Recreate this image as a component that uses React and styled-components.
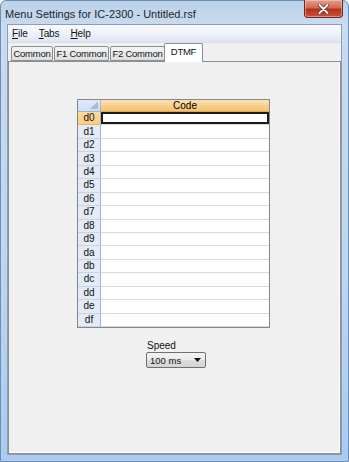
import React from 'react';
import styled, { createGlobalStyle } from 'styled-components';

const Global = createGlobalStyle`
  html, body { margin: 0; padding: 0; background: #fff; }
  body {
    width: 349px; height: 462px; overflow: hidden;
    font-family: "Liberation Sans", "Noto Sans", sans-serif;
    font-size: 10px; color: #000;
  }
  * { box-sizing: border-box; }
`;

const Window = styled.div`
  width: 349px;
  height: 462px;
  display: flex;
  flex-direction: column;
  background: linear-gradient(180deg, #bcd2ea 0px, #c8dbef 24px, #bdd5ef 60%, #a9cbf0 100%);
  border: 1px solid #6e8fb5;
  border-radius: 6px 6px 0 0;
  padding: 0 6px 6px;
`;

const TitleBar = styled.div`
  height: 23px;
  margin: 0 -6px;
  padding-left: 4px;
  display: flex;
  align-items: center;
  justify-content: space-between;
`;

const Title = styled.span`
  font-size: 11px;
  color: #1e1e1e;
  padding-top: 2px;
`;

const CloseButton = styled.div`
  align-self: flex-start;
  width: 39px;
  height: 18px;
  margin-top: -1px;
  margin-right: 5px;
  border: 1px solid #6a2a22;
  border-top: none;
  border-radius: 0 0 4px 4px;
  background: linear-gradient(180deg, #e3a08f 0%, #d26a52 45%, #b8311b 55%, #c8513a 100%);
  box-shadow: inset 0 0 0 1px rgba(255, 220, 210, 0.45);
  display: flex;
  align-items: center;
  justify-content: center;
`;

const Client = styled.div`
  flex: 1;
  display: flex;
  flex-direction: column;
  background: #f0f0f0;
  border: 1px solid #8e9db3;
`;

const MenuBar = styled.div`
  height: 18px;
  display: flex;
  align-items: center;
  gap: 11px;
  padding-left: 4px;
  background: linear-gradient(180deg, #f8f9fd 0%, #eef2fa 50%, #dee5f2 100%);
  border-bottom: 1px solid #d8deea;
`;

const MenuItem = styled.span`
  font-size: 10px;
  letter-spacing: -0.1px;
  color: #111;
  white-space: nowrap;
  u { text-decoration: underline; text-underline-offset: 1px; }
`;

const TabStrip = styled.div`
  height: 18px;
  display: flex;
  align-items: flex-end;
  padding-left: 2px;
  position: relative;
  z-index: 1;
`;

const Tab = styled.div`
  width: ${p => p.$w}px;
  height: ${p => (p.$active ? 19 : 15)}px;
  margin: 0 ${p => (p.$active ? -1 : 0)}px 0 ${p => (p.$active ? -1 : 1)}px;
  margin-bottom: ${p => (p.$active ? -1 : 0)}px;
  display: flex;
  align-items: center;
  justify-content: center;
  padding-bottom: ${p => (p.$active ? 3 : 0)}px;
  font-size: 9.5px;
  letter-spacing: -0.25px;
  white-space: nowrap;
  overflow: hidden;
  color: #111;
  border: 1px solid #8a8e97;
  border-bottom: ${p => (p.$active ? 'none' : '1px solid #8a8e97')};
  border-radius: 2px 2px 0 0;
  background: ${p => (p.$active ? '#ffffff' : 'linear-gradient(180deg, #f4f4f4 0%, #ebebeb 50%, #dddddd 100%)')};
`;

const TabPanel = styled.div`
  flex: 1;
  display: flex;
  flex-direction: column;
  align-items: center;
  border: 1px solid #8a8e97;
  box-shadow: inset -1px 0 0 #ffffff, inset 0 -1px 0 #ffffff;
  background: #f0f0f0;
  padding-top: 37px;
  padding-right: 2px;
`;

const Grid = styled.div`
  width: 193px;
  border: 1px solid #828790;
  background: #ffffff;
  display: grid;
  grid-template-columns: 23px 1fr;
  grid-template-rows: 12px repeat(16, 13.44px);
`;

const Corner = styled.div`
  background: linear-gradient(180deg, #e1ebf7, #cfdef1);
  border-right: 1px solid #9eb6ce;
  border-bottom: 1px solid #9eb6ce;
  display: flex;
  align-items: flex-end;
  justify-content: flex-end;
  padding: 0 2px 2px 0;
`;

const ColHeader = styled.div`
  background: linear-gradient(180deg, #fbe2b4 0%, #f7d191 50%, #f3c26f 100%);
  border-bottom: 1px solid #e3a84f;
  display: flex;
  align-items: center;
  justify-content: center;
  font-size: 10px;
  line-height: 1;
`;

const RowHeader = styled.div`
  background: ${p => (p.$selected ? 'linear-gradient(180deg, #fbdca2, #f6cc82)' : '#e3ebf6')};
  border-right: 1px solid #9eb6ce;
  border-bottom: 1px solid ${p => (p.$selected ? '#e9b765' : '#c6d5e8')};
  display: flex;
  align-items: center;
  justify-content: center;
  font-size: 10px;
  line-height: 1;
  color: #111;
`;

const Cell = styled.div`
  background: #ffffff;
  border-bottom: 1px solid #d9d9d9;
  box-shadow: ${p => (p.$current ? 'inset 0 0 0 2px #1b1b1b' : 'none')};
`;

const SpeedGroup = styled.div`
  margin-top: 12px;
  margin-left: 5px;
  display: flex;
  flex-direction: column;
  gap: 1px;
`;

const Label = styled.span`
  font-size: 10px;
  color: #111;
  padding-left: 1px;
`;

const Select = styled.div`
  width: 60px;
  height: 16px;
  border: 1px solid #707070;
  border-radius: 2px;
  background: linear-gradient(180deg, #f3f3f3 0%, #ebebeb 50%, #dddddd 51%, #d4d4d4 100%);
  display: flex;
  align-items: center;
  justify-content: space-between;
  padding: 0 4px 0 3px;
  font-size: 9.5px;
  color: #111;
`;

const rows = ['d0','d1','d2','d3','d4','d5','d6','d7','d8','d9','da','db','dc','dd','de','df'];
const tabs = [
  { label: 'Common', w: 42 },
  { label: 'F1 Common', w: 55 },
  { label: 'F2 Common', w: 55 },
  { label: 'DTMF', w: 39, active: true },
];

export default function App() {
  return (
    <>
      <Global />
      <Window>
        <TitleBar>
          <Title>Menu Settings for IC-2300 - Untitled.rsf</Title>
          <CloseButton>
            <svg width="11" height="10" viewBox="0 0 11 10">
              <path d="M1.5 1 L9.5 9 M9.5 1 L1.5 9" stroke="#5a1a12" strokeWidth="3.2" strokeLinecap="round" />
              <path d="M1.5 1 L9.5 9 M9.5 1 L1.5 9" stroke="#ffffff" strokeWidth="2" strokeLinecap="round" />
            </svg>
          </CloseButton>
        </TitleBar>
        <Client>
          <MenuBar>
            <MenuItem><u>F</u>ile</MenuItem>
            <MenuItem><u>T</u>abs</MenuItem>
            <MenuItem><u>H</u>elp</MenuItem>
          </MenuBar>
          <TabStrip>
            {tabs.map(t => (
              <Tab key={t.label} $w={t.w} $active={t.active}>{t.label}</Tab>
            ))}
          </TabStrip>
          <TabPanel>
            <Grid>
              <Corner>
                <svg width="8" height="8" viewBox="0 0 8 8">
                  <path d="M8 0 L8 8 L0 8 Z" fill="#a8bcd6" />
                </svg>
              </Corner>
              <ColHeader>Code</ColHeader>
              {rows.map((r, i) => (
                <React.Fragment key={r}>
                  <RowHeader $selected={i === 0}>{r}</RowHeader>
                  <Cell $current={i === 0} />
                </React.Fragment>
              ))}
            </Grid>
            <SpeedGroup>
              <Label>Speed</Label>
              <Select>
                <span>100 ms</span>
                <svg width="7" height="4" viewBox="0 0 7 4">
                  <path d="M0 0 L7 0 L3.5 4 Z" fill="#111" />
                </svg>
              </Select>
            </SpeedGroup>
          </TabPanel>
        </Client>
      </Window>
    </>
  );
}
